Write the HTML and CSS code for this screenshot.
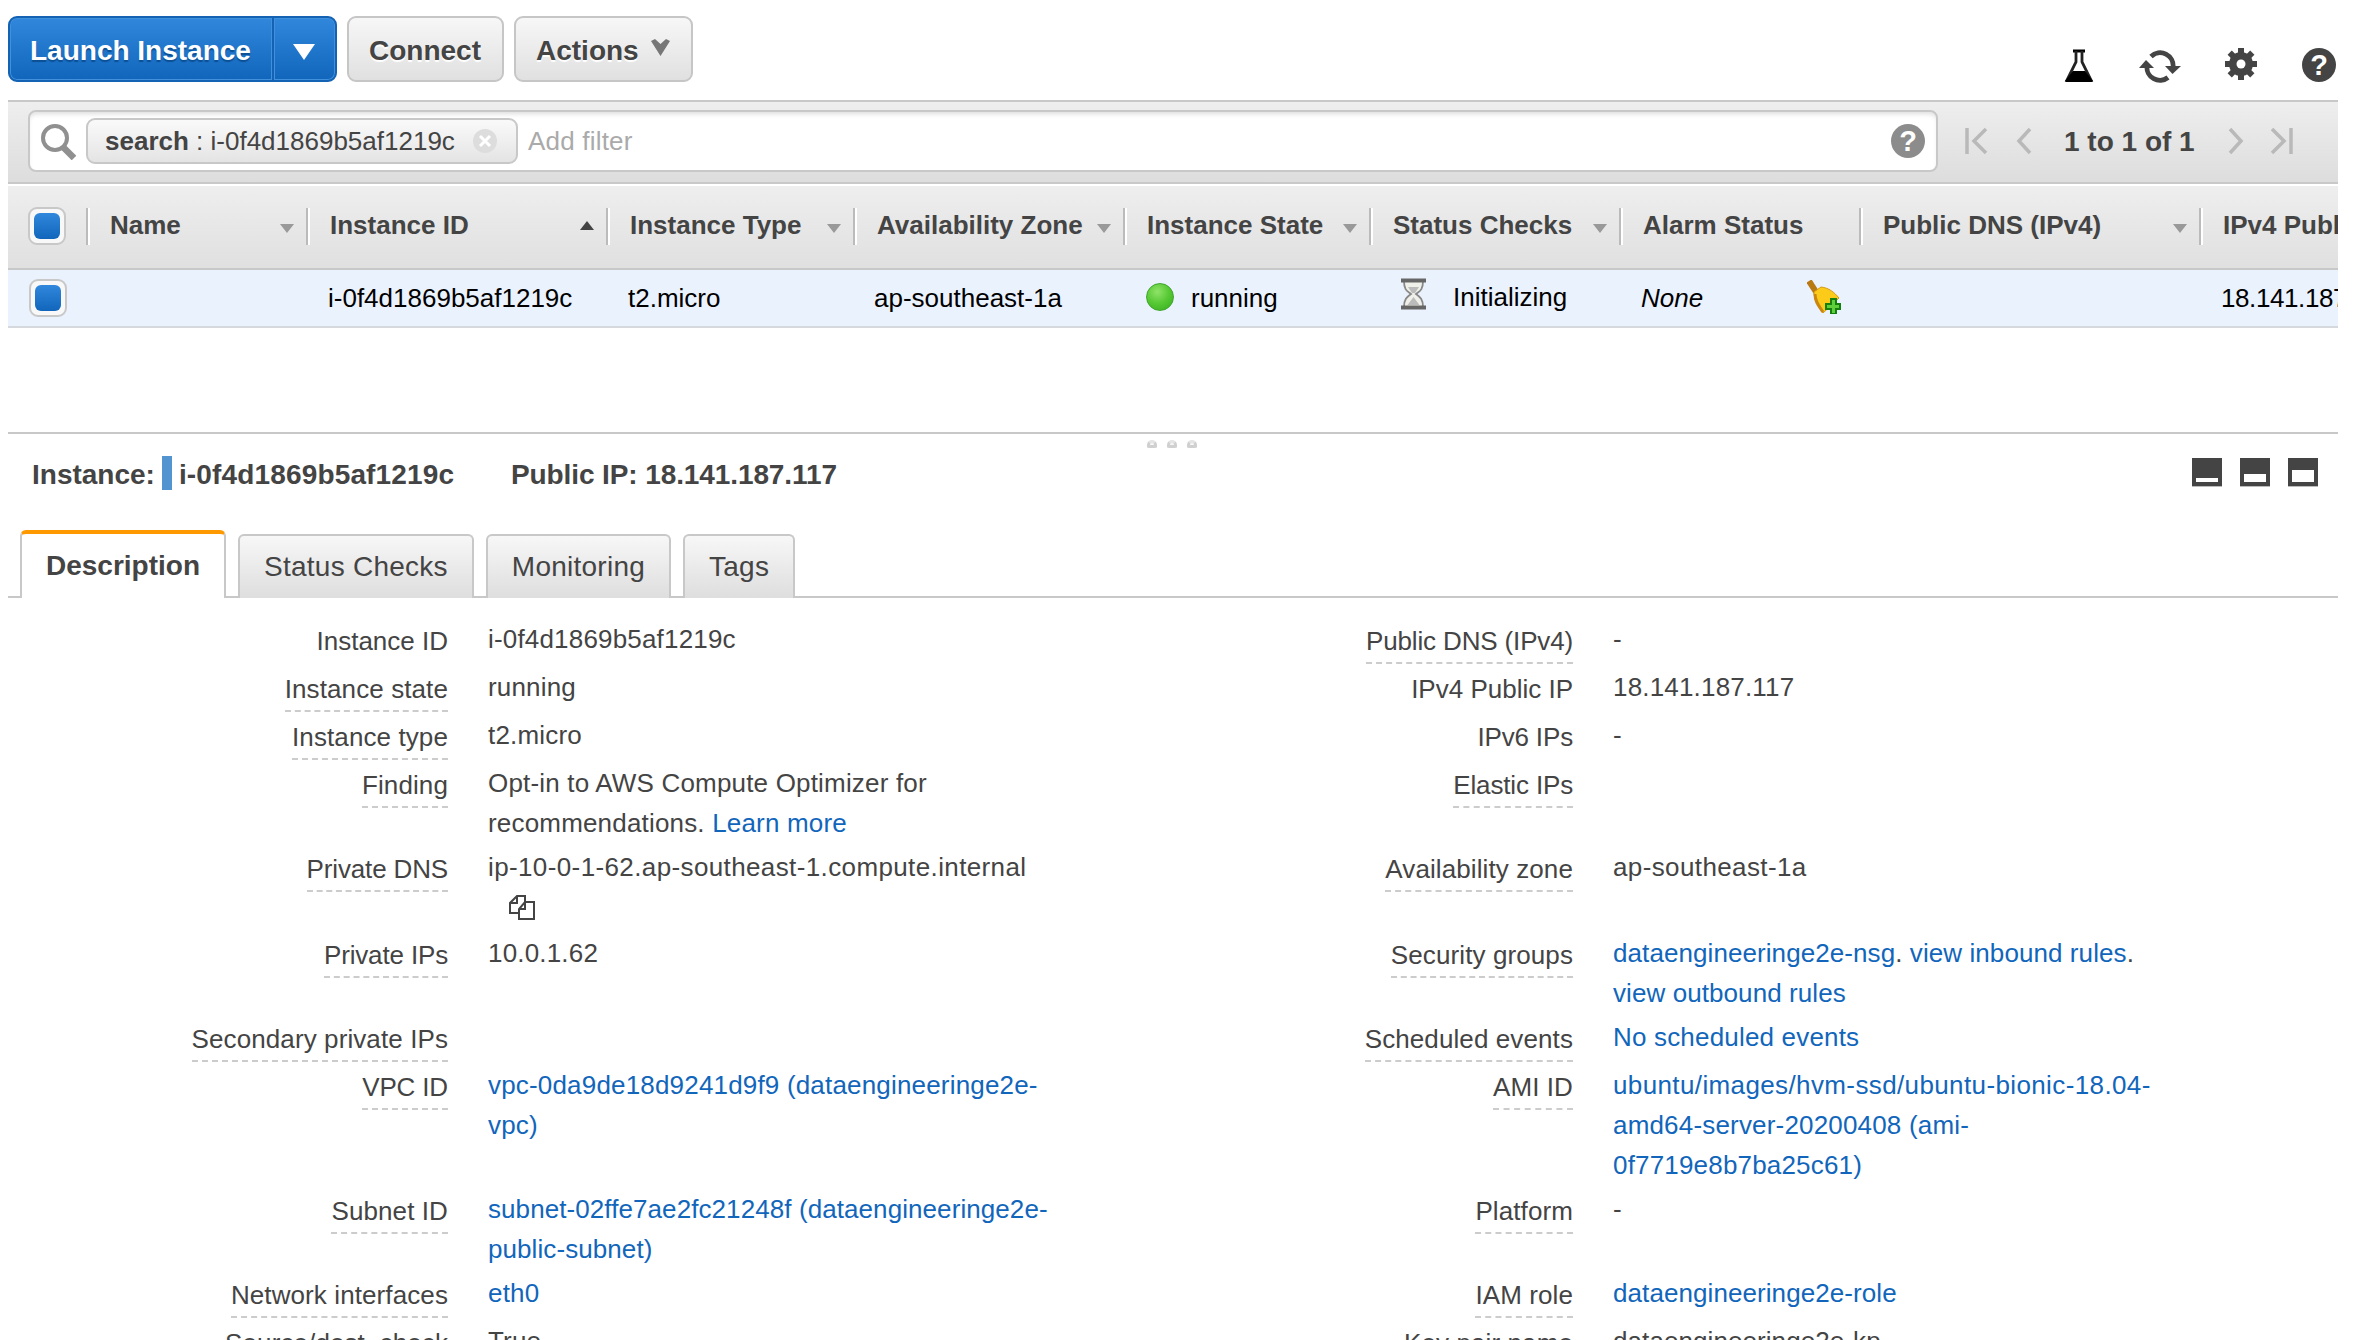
FILE: index.html
```html
<!DOCTYPE html>
<html lang="en">
<head>
    <meta charset="UTF-8">
    <title>Instances | EC2 Management Console</title>
    <link rel="stylesheet" href="styles.css">
</head>
<body>
    <div class="toolbar">
        <div class="btn-split">
            <button class="btn-primary">Launch Instance</button>
            <button class="btn-primary btn-caret"><svg width="22" height="16" viewBox="0 0 22 16"><path d="M0 0h22L11 16z" fill="#fff"/></svg></button>
        </div>
        <button class="btn connect">Connect</button>
        <button class="btn actions">Actions
            <svg width="19" height="18" viewBox="0 0 19 18"><path d="M0 2l4-2 5.500 5L15 0l4 2-9.500 15z" fill="#777"/></svg>
        </button>
        <div class="tools">
            <svg width="30" height="34" viewBox="0 0 30 34"><path d="M9 2h12" stroke="#000" stroke-width="3"/><path d="M12 2v11L3 31h24L18 13V2" fill="none" stroke="#222" stroke-width="2.800"/><path d="M9 22h12l8 10-1 1H2l-1-1z" fill="#000"/></svg>
            <svg class="refresh" width="42" height="34" viewBox="0 0 42 34"><path d="M12 6.500a13 13 0 0 1 22 11M29 27.500A13 13 0 0 1 8 16" fill="none" stroke="#444" stroke-width="4.800"/><path d="M26 16h16l-8.500 8zM0 18h15L7 10z" fill="#444"/></svg>
            <svg class="gear" width="32" height="32" viewBox="-16 -16 32 32">
                <g fill="#444">
                    <rect x="-3" y="-16" width="6" height="32"/>
                    <rect x="-3" y="-16" width="6" height="32" transform="rotate(45)"/>
                    <rect x="-3" y="-16" width="6" height="32" transform="rotate(90)"/>
                    <rect x="-3" y="-16" width="6" height="32" transform="rotate(135)"/>
                    <circle r="12"/>
                </g>
                <circle r="4.500" fill="#fff"/>
            </svg>
            <span class="help help-dark">?</span>
        </div>
    </div>

    <div class="filter-bar">
        <div class="search-box">
            <svg class="magnifier" width="36" height="36" viewBox="0 0 36 36" fill="none" stroke="#909090"><circle cx="14" cy="14" r="12" stroke-width="4"/><path d="M22 23l11 11" stroke-width="6.500"/></svg>
            <div class="tag">
                <span><b>search</b> : i-0f4d1869b5af1219c</span>
                <svg width="24" height="24" viewBox="0 0 24 24"><circle cx="12" cy="12" r="12" fill="#ddd"/><path d="M7 7l10 10M17 7L7 17" stroke="#fff" stroke-width="3"/></svg>
            </div>
            <span class="placeholder">Add filter</span>
            <span class="help help-grey">?</span>
        </div>
        <div class="pager">
            <svg width="23" height="28" viewBox="0 0 23 28"><path d="M2 1v26M21 2L9 14l12 12"/></svg>
            <svg class="prev" width="16" height="28" viewBox="0 0 16 28"><path d="M14 2L3 14l11 12"/></svg>
            <span>1 to 1 of 1</span>
            <svg class="next" width="16" height="28" viewBox="0 0 16 28"><path d="M2 2l11 12L2 26"/></svg>
            <svg width="23" height="28" viewBox="0 0 23 28"><path d="M2 2l12 12L2 26M21 1v26"/></svg>
        </div>
    </div>

    <div class="grid grid-head">
        <div class="check-cell"><span class="check"></span></div>
        <div class="th">Name<i class="down"></i></div>
        <div class="th">Instance ID<i class="up"></i></div>
        <div class="th">Instance Type<i class="down"></i></div>
        <div class="th">Availability Zone<i class="down"></i></div>
        <div class="th">Instance State<i class="down"></i></div>
        <div class="th">Status Checks<i class="down"></i></div>
        <div class="th">Alarm Status</div>
        <div class="th">Public DNS (IPv4)<i class="down"></i></div>
        <div class="th">IPv4 Public IP</div>
    </div>
    <div class="grid grid-row">
        <div class="check-cell"><span class="check"></span></div>
        <div class="td"></div>
        <div class="td">i-0f4d1869b5af1219c</div>
        <div class="td">t2.micro</div>
        <div class="td zone">ap-southeast-1a</div>
        <div class="td state"><span class="dot"></span>running</div>
        <div class="td status">
            <svg width="27" height="34" viewBox="0 0 27 34"><path d="M4 3c0 9 3 10 7 13-4 3-7 5-7 13h19c0-8-3-10-7-13 4-3 7-4 7-13z" fill="#f0f0ea" stroke="#888" stroke-width="1.800"/><path d="M8 9h11l-4 6h-3zM13.500 19l6 8h-12z" fill="#bbb"/><path d="M1 2.500h25M1 29.500h25" stroke="#666" stroke-width="4"/></svg>
            <span>Initializing</span>
        </div>
        <div class="td alarm"><em>None</em>
            <svg width="34" height="34" viewBox="0 0 34 34"><path d="M2 1l9 14" stroke="#b87812" stroke-width="6"/><path d="M7 12l7-5c8 1 13 5 18 11L16 33c-4-6-9-12-9-21z" fill="#fccb1a" stroke="#d79a10"/><path d="M8 14c0 8 4 12 8 18" stroke="#c98710" stroke-width="3" fill="none"/><path d="M24 19h5v5h4v5h-4v5h-5v-5h-5v-5h5z" fill="#5fd03c" stroke="#15800e" stroke-width="2"/></svg>
        </div>
        <div class="td"></div>
        <div class="td ip">18.141.187.117</div>
    </div>

    <div class="details">
        <div class="grip"><i></i><i></i><i></i></div>
        <div class="details-head">
            <span>Instance:</span><span class="bar"></span><span class="name">i-0f4d1869b5af1219c</span><span class="public-ip">Public IP: 18.141.187.117</span>
            <div class="panes"><i class="pane-sm"></i><i class="pane-md"></i><i class="pane-lg"></i></div>
        </div>
        <div class="tabs">
            <div class="tab active">Description</div>
            <div class="tab">Status Checks</div>
            <div class="tab">Monitoring</div>
            <div class="tab">Tags</div>
        </div>

        <div class="rows">
            <div class="row">
                <div class="label"><span class="plain">Instance ID</span></div><div class="value">i-0f4d1869b5af1219c</div>
                <div class="label"><span class="tight">Public DNS (IPv4)</span></div><div class="value">-</div>
            </div>
            <div class="row">
                <div class="label"><span>Instance state</span></div><div class="value">running</div>
                <div class="label"><span class="plain">IPv4 Public IP</span></div><div class="value">18.141.187.117</div>
            </div>
            <div class="row">
                <div class="label"><span>Instance type</span></div><div class="value">t2.micro</div>
                <div class="label"><span class="plain tight">IPv6 IPs</span></div><div class="value">-</div>
            </div>
            <div class="row">
                <div class="label"><span>Finding</span></div><div class="value">Opt-in to AWS Compute Optimizer for recommendations. <a>Learn more</a></div>
                <div class="label"><span class="tight">Elastic IPs</span></div><div class="value"></div>
            </div>
            <div class="row row-copy">
                <div class="label"><span class="tight">Private DNS</span></div>
                <div class="value"><span class="wide">ip-10-0-1-62.ap-southeast-1.compute.internal</span>
                    <svg class="copy" width="26" height="26" viewBox="0 0 26 26" fill="#fff" stroke="#444" stroke-width="2"><path d="M8 1h8v17H1V8zM8 1v7H1"/><path d="M16 7h9v17H10V14zM16 7v7h-6"/></svg>
                </div>
                <div class="label"><span>Availability zone</span></div><div class="value wide">ap-southeast-1a</div>
            </div>
            <div class="row">
                <div class="label"><span class="tight">Private IPs</span></div><div class="value">10.0.1.62</div>
                <div class="label"><span>Security groups</span></div><div class="value groups"><a>dataengineeringe2e-nsg</a>. <a>view inbound rules</a>. <a>view outbound rules</a></div>
            </div>
            <div class="row">
                <div class="label"><span>Secondary private IPs</span></div><div class="value"></div>
                <div class="label"><span>Scheduled events</span></div><div class="value"><a>No scheduled events</a></div>
            </div>
            <div class="row">
                <div class="label"><span class="tight">VPC ID</span></div><div class="value"><a>vpc-0da9de18d9241d9f9 (dataengineeringe2e-<br>vpc)</a></div>
                <div class="label"><span>AMI ID</span></div><div class="value"><a><span class="wide">ubuntu/images/hvm-ssd/ubuntu-bionic-18.04-</span><br>amd64-server-20200408 (ami-<br>0f7719e8b7ba25c61)</a></div>
            </div>
            <div class="row">
                <div class="label"><span>Subnet ID</span></div><div class="value groups"><a>subnet-02ffe7ae2fc21248f (dataengineeringe2e-<br>public-subnet)</a></div>
                <div class="label"><span>Platform</span></div><div class="value">-</div>
            </div>
            <div class="row">
                <div class="label"><span>Network interfaces</span></div><div class="value"><a>eth0</a></div>
                <div class="label"><span>IAM role</span></div><div class="value groups"><a>dataengineeringe2e-role</a></div>
            </div>
            <div class="row">
                <div class="label"><span>Source/dest. check</span></div><div class="value">True</div>
                <div class="label"><span>Key pair name</span></div><div class="value groups">dataengineeringe2e-kp</div>
            </div>
        </div>
    </div>
</body>
</html>
```

FILE: styles.css
```css
* {
    box-sizing: border-box;
}

body {
    margin: 0;
    padding: 0 18px 0 8px;
    height: 1340px;
    overflow: hidden;
    background: #fff;
    color: #444;
    font-family: "Liberation Sans", Arial, sans-serif;
    font-size: 26px;
}

svg {
    flex: none;
}

.toolbar {
    display: flex;
    height: 100px;
    padding-top: 16px;
}

.btn-split {
    display: flex;
    width: 329px;
    margin-right: 10px;
}

button {
    height: 66px;
    padding: 2px 20px 0;
    font: bold 28px/62px "Liberation Sans", Arial, sans-serif;
    text-align: left;
    white-space: nowrap;
}

.btn-primary {
    width: 266px;
    border: 2px solid #1462b4;
    border-radius: 9px 0 0 9px;
    background: linear-gradient(#3087dc, #1166bb);
    box-shadow: inset 0 0 0 1px #4090dc;
    color: #fff;
    text-shadow: 0 2px 1px #0c4f94;
}

.btn-primary.btn-caret {
    width: 65px;
    margin-left: -2px;
    padding: 5px 0 0 19px;
    border-radius: 0 9px 9px 0;
    line-height: 0;
}

.btn {
    border: 2px solid #c6c6c6;
    border-radius: 9px;
    background: linear-gradient(#f7f7f7, #e0e0e0);
    color: #444;
    text-shadow: 0 2px 1px #fff;
}

.connect {
    width: 157px;
    margin-right: 10px;
}

.actions {
    width: 179px;
}

.actions svg {
    margin-left: 5px;
    vertical-align: 3px;
}

.tools {
    display: flex;
    align-items: flex-start;
    margin-left: auto;
    padding: 33px 2px 0 0;
}

.refresh {
    margin: 1px 0 0 45px;
}

.gear {
    margin: -1px 45px 0 44px;
}

.help {
    width: 34px;
    height: 34px;
    border-radius: 50%;
    color: #fff;
    font-weight: bold;
    font-size: 29px;
    line-height: 35px;
    text-align: center;
}

.help-dark {
    margin-top: -1px;
    background: #444;
}

.help-grey {
    margin: 0 11px 0 auto;
    background: #8c8c8c;
}

.filter-bar {
    display: flex;
    height: 84px;
    padding: 8px 0 0 20px;
    border-top: 2px solid #c8c8c8;
    border-bottom: 2px solid #c8c8c8;
    background: linear-gradient(#eee, #ddd);
}

.search-box {
    display: flex;
    align-items: center;
    width: 1910px;
    height: 62px;
    padding-left: 12px;
    border: 2px solid #c8c8c8;
    border-radius: 8px;
    background: #fff;
    box-shadow: inset 0 4px 5px -2px #ddd;
}

.magnifier {
    margin: 2px 1px 0 -1px;
}

.tag {
    display: flex;
    align-items: center;
    width: 432px;
    height: 46px;
    margin: 0 10px 0 8px;
    padding: 0 19px 0 17px;
    border: 2px solid #c8c8c8;
    border-radius: 9px;
    background: linear-gradient(#fafafa, #e4e4e4);
    white-space: nowrap;
}

.tag svg {
    margin-left: auto;
}

.placeholder {
    color: #aaa;
    letter-spacing: .2px;
}

.pager {
    display: flex;
    align-items: center;
    margin: -2px 0 0 27px;
    height: 66px;
    font-weight: bold;
    font-size: 28px;
    white-space: nowrap;
}

.pager svg {
    fill: none;
    stroke: #b9b9b9;
    stroke-width: 3.5;
}

.pager span {
    width: 130px;
    padding-top: 2px;
}

.pager .prev {
    margin: 0 32px 0 28px;
}

.pager .next {
    margin: 0 26px 0 34px;
}

.grid {
    display: grid;
    grid-template-columns: 78px 220px 300px 247px 270px 246px 250px 240px 340px 139px;
    overflow: hidden;
    white-space: nowrap;
}

.grid-head {
    height: 86px;
    padding-top: 22px;
    border-top: 2px solid #fff;
    border-bottom: 2px solid #c8c8c8;
    background: linear-gradient(#eee, #e0e0e0);
    font-weight: bold;
}

.grid-row {
    height: 58px;
    border-bottom: 2px solid #d5d8dc;
    background: #eaf2fe;
    color: #000;
}

.check {
    display: block;
    width: 38px;
    height: 38px;
    margin: -1px 0 0 20px;
    padding: 4px;
    border: 2px solid #c8c8c8;
    border-radius: 9px;
    background: #f8f8f8;
}

.check::before {
    content: "";
    display: block;
    width: 26px;
    height: 26px;
    border-radius: 6px;
    background: linear-gradient(#3087dc, #1166bb);
}

.grid-row .check {
    margin: 9px 0 0 21px;
}

.th {
    display: flex;
    align-items: center;
    justify-content: space-between;
    height: 37px;
    padding: 0 12px 2px 22px;
    border-left: 2px solid #bbb;
    box-shadow: inset 2px 0 #fff;
}

.th i {
    border: 7px solid transparent;
    border-bottom: 0;
    border-top: 9px solid #999;
}

.th .down {
    margin-top: 5px;
}

.th .up {
    border: 7px solid transparent;
    border-top: 0;
    border-bottom: 9px solid #444;
    margin-top: -1px;
}

.td {
    padding-left: 22px;
    line-height: 56px;
}

.zone {
    padding-left: 21px;
}

.ip {
    letter-spacing: -.4px;
}

.state,
.status,
.alarm {
    display: flex;
    align-items: center;
}

.dot {
    width: 28px;
    height: 28px;
    margin: -2px 17px 0 1px;
    border: 1px solid #3fa52c;
    border-radius: 50%;
    background: radial-gradient(circle at 40% 30%, #8fe368, #55c833 50%, #35ac1e);
}

.status {
    padding-left: 31px;
}

.status svg {
    margin: -6px 26px 0 0;
}

.status span {
    margin-top: -2px;
}

.alarm svg {
    margin: -3px 0 0 104px;
}

.details {
    margin-top: 104px;
    border-top: 2px solid #c8c8c8;
}

.grip {
    display: flex;
    gap: 10px;
    height: 14px;
    padding: 6px 0 0 1139px;
}

.grip i {
    width: 10px;
    height: 8px;
    border: 3px solid #d0d0d0;
    border-top-color: #e4e4e4;
    border-radius: 5px 5px 2px 2px;
    background: #f6f6f6;
}

.details-head {
    display: flex;
    align-items: center;
    height: 52px;
    padding: 0 20px 0 24px;
    font-weight: bold;
    font-size: 28px;
}

.details-head span {
    margin-top: 2px;
}

.details-head .bar {
    width: 10px;
    height: 34px;
    margin: -2px 7px 0;
    background: #5294cf;
}

.name {
    width: 332px;
    letter-spacing: .15px;
}

.public-ip {
    letter-spacing: -.1px;
}

.panes {
    display: flex;
    gap: 18px;
    margin: -4px 0 0 auto;
}

.panes i {
    width: 30px;
    height: 28px;
    border: 4px solid #444;
    background: #fff;
    box-shadow: 0 1px #bbb;
}

.panes .pane-sm {
    border-top-width: 20px;
}

.panes .pane-md {
    border-top-width: 16px;
}

.panes .pane-lg {
    border-top-width: 12px;
}

.tabs {
    display: flex;
    align-items: flex-end;
    gap: 12px;
    height: 98px;
    padding-left: 12px;
    background: linear-gradient(#c8c8c8, #c8c8c8) bottom / 100% 2px no-repeat;
    font-size: 28px;
}

.tab {
    height: 64px;
    padding: 0 24px;
    border: 2px solid #c8c8c8;
    border-bottom: 0;
    border-radius: 6px 6px 0 0;
    background: linear-gradient(#f7f7f7, #dedede);
    line-height: 61px;
    letter-spacing: .25px;
}

.tab.active {
    height: 68px;
    border-top: 4px solid #f90;
    background: #fff;
    font-weight: bold;
    line-height: 64px;
    letter-spacing: 0;
}

.rows {
    padding-top: 21px;
}

.row {
    display: grid;
    grid-template-columns: 440px 570px 477px 570px;
    column-gap: 39px;
    min-height: 48px;
    padding-bottom: 4px;
    line-height: 40px;
}

.row-copy {
    min-height: 86px;
}

.label {
    height: 40px;
    text-align: right;
}

.label span {
    display: inline-block;
    height: 45px;
    border-bottom: 2px dashed #ccc;
    line-height: 44px;
    letter-spacing: .1px;
}

.label .plain {
    border-color: transparent;
    letter-spacing: 0;
}

.label .tight {
    letter-spacing: -.15px;
}

.value {
    padding-left: 1px;
    letter-spacing: .18px;
}

.groups {
    letter-spacing: .08px;
}

.wide {
    letter-spacing: .38px;
}

.copy {
    margin: 0 0 -5px 21px;
}

a {
    color: #1166bb;
}
```
